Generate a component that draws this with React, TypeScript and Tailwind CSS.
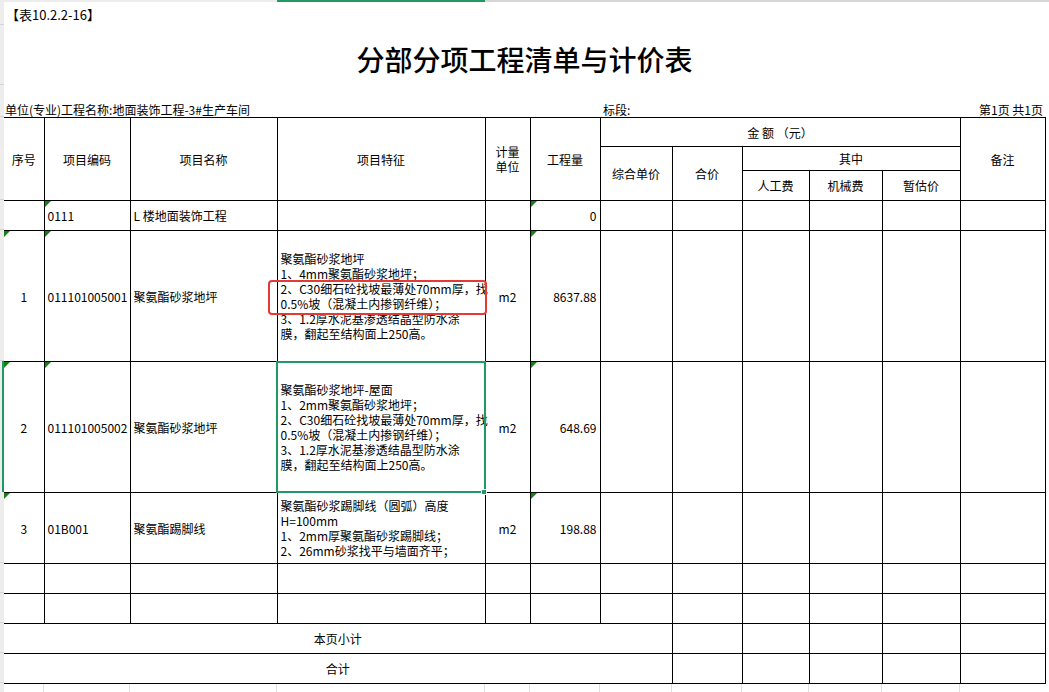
import React from "react";

// 分部分项工程清单与计价表 — spreadsheet print view
const td = "border border-black p-0 text-[12px] leading-[15px] align-middle";
const tdC = td + " text-center";
const tdL = td + " text-left pl-[3px]";
const tdR = td + " text-right pr-[3px] text-[11px]";

// the little green "number stored as text" corner
const Mark = () => (
  <span className="absolute left-0 top-0 h-0 w-0 border-t-[6px] border-r-[6px] border-t-[#128212] border-r-transparent" />
);

const Lines = ({ lines }: { lines: string[] }) => (
  <div className="whitespace-nowrap">
    {lines.map((l, i) => (
      <div key={i}>{l}</div>
    ))}
  </div>
);

const EmptyCells = ({ n }: { n: number }) => (
  <>
    {Array.from({ length: n }).map((_, i) => (
      <td key={i} className={td} />
    ))}
  </>
);

const feat1 = [
  "聚氨酯砂浆地坪",
  "1、4mm聚氨酯砂浆地坪；",
  "2、C30细石砼找坡最薄处70mm厚，找",
  "0.5%坡（混凝土内掺钢纤维）；",
  "3、1.2厚水泥基渗透结晶型防水涂",
  "膜，翻起至结构面上250高。",
];
const feat2 = [
  "聚氨酯砂浆地坪-屋面",
  "1、2mm聚氨酯砂浆地坪；",
  "2、C30细石砼找坡最薄处70mm厚，找",
  "0.5%坡（混凝土内掺钢纤维）；",
  "3、1.2厚水泥基渗透结晶型防水涂",
  "膜，翻起至结构面上250高。",
];
const feat3 = [
  "聚氨酯砂浆踢脚线（圆弧）高度",
  "H=100mm",
  "1、2mm厚聚氨酯砂浆踢脚线；",
  "2、26mm砂浆找平与墙面齐平；",
];

export default function App() {
  return (
    <div className="relative h-[692px] w-[1049px] overflow-hidden bg-white font-['Noto_Sans_CJK_SC',sans-serif] text-black">
      {/* column header edge */}
      <div className="flex h-[2px]">
        <div className="w-[277px] bg-[#ececec]" />
        <div className="w-[208px] bg-[#1f9a62]" />
        <div className="flex-1 bg-[#d6d6d6]" />
      </div>

      <div className="flex">
        {/* row header edge */}
        <div className="flex h-[690px] w-[4px] flex-col bg-[#ededed]">
          <div className="h-[23px] border-b border-[#d4d4d4]" />
          <div className="h-[60px] border-b border-[#d4d4d4]" />
          <div className="h-[32px] border-b border-[#d4d4d4]" />
          <div className="h-[83px] border-b border-[#d4d4d4]" />
          <div className="h-[30px] border-b border-[#d4d4d4]" />
          <div className="h-[131px] border-b border-[#d4d4d4]" />
          <div className="flex h-[131px] justify-end">
            <div className="w-[2px] bg-[#1f9a62]" />
          </div>
          <div className="h-[71px] border-b border-[#d4d4d4]" />
          <div className="h-[30px] border-b border-[#d4d4d4]" />
          <div className="h-[30px] border-b border-[#d4d4d4]" />
          <div className="h-[30px] border-b border-[#d4d4d4]" />
          <div className="h-[30px] border-b border-[#d4d4d4]" />
          <div className="flex-1" />
        </div>

        <div className="w-[1045px]">
          {/* sheet heading */}
          <div className="flex h-[115px] w-[1041px] flex-col">
            <div className="h-[26px] pl-[2px] pt-[4px] text-[13px] leading-[17px]">【表10.2.2-16】</div>
            <div className="flex h-[62px] items-center justify-center text-[28px] font-medium leading-[36px]">
              分部分项工程清单与计价表
            </div>
            <div className="flex h-[27px] items-end text-[12px] leading-[14px]">
              <div className="w-[599px] pl-[1px]">单位(专业)工程名称:地面装饰工程-3#生产车间</div>
              <div className="flex-1">标段:</div>
              <div className="pr-[2px]">第1页 共1页</div>
            </div>
          </div>

          <table className="w-[1041px] table-fixed border-collapse">
            <colgroup>
              <col className="w-[40px]" />
              <col className="w-[86px]" />
              <col className="w-[147px]" />
              <col className="w-[208px]" />
              <col className="w-[45px]" />
              <col className="w-[70px]" />
              <col className="w-[72px]" />
              <col className="w-[70px]" />
              <col className="w-[67px]" />
              <col className="w-[73px]" />
              <col className="w-[78px]" />
              <col className="w-[85px]" />
            </colgroup>
            <tbody>
              <tr className="h-[29px]">
                <td rowSpan={3} className={tdC + " border-l-0"}>序号</td>
                <td rowSpan={3} className={tdC}>项目编码</td>
                <td rowSpan={3} className={tdC}>项目名称</td>
                <td rowSpan={3} className={tdC}>项目特征</td>
                <td rowSpan={3} className={tdC}>
                  计量
                  <br />
                  单位
                </td>
                <td rowSpan={3} className={tdC}>工程量</td>
                <td colSpan={5} className={tdC}>金 额 （元）</td>
                <td rowSpan={3} className={tdC}>备注</td>
              </tr>
              <tr className="h-[24px]">
                <td rowSpan={2} className={tdC}>综合单价</td>
                <td rowSpan={2} className={tdC}>合价</td>
                <td colSpan={3} className={tdC}>其中</td>
              </tr>
              <tr className="h-[30px]">
                <td className={tdC}>人工费</td>
                <td className={tdC}>机械费</td>
                <td className={tdC}>暂估价</td>
              </tr>

              <tr className="h-[30px]">
                <td className={td + " border-l-0"} />
                <td className={tdL + " relative text-[11px]"}>
                  0111
                  <Mark />
                </td>
                <td className={tdL}>L 楼地面装饰工程</td>
                <td className={td} />
                <td className={td} />
                <td className={tdR + " relative"}>
                  0
                  <Mark />
                </td>
                <EmptyCells n={6} />
              </tr>

              <tr className="h-[131px]">
                <td className={tdC + " relative border-l-0 text-[11px]"}>
                  1
                  <Mark />
                </td>
                <td className={tdL + " relative text-[11px]"}>
                  011101005001
                  <Mark />
                </td>
                <td className={tdL}>聚氨酯砂浆地坪</td>
                <td className={tdL}>
                  <Lines lines={feat1} />
                </td>
                <td className={tdC + " text-[11px]"}>m2</td>
                <td className={tdR + " relative"}>
                  8637.88
                  <Mark />
                </td>
                <EmptyCells n={6} />
              </tr>

              <tr className="h-[131px]">
                <td className={tdC + " relative border-l-0 text-[11px]"}>
                  2
                  <Mark />
                </td>
                <td className={tdL + " relative text-[11px]"}>
                  011101005002
                  <Mark />
                </td>
                <td className={tdL}>聚氨酯砂浆地坪</td>
                <td className={tdL}>
                  <Lines lines={feat2} />
                </td>
                <td className={tdC + " text-[11px]"}>m2</td>
                <td className={tdR + " relative"}>
                  648.69
                  <Mark />
                </td>
                <EmptyCells n={6} />
              </tr>

              <tr className="h-[71px]">
                <td className={tdC + " relative border-l-0 text-[11px]"}>
                  3
                  <Mark />
                </td>
                <td className={tdL + " text-[11px]"}>01B001</td>
                <td className={tdL}>聚氨酯踢脚线</td>
                <td className={tdL}>
                  <Lines lines={feat3} />
                </td>
                <td className={tdC + " text-[11px]"}>m2</td>
                <td className={tdR + " relative"}>
                  198.88
                  <Mark />
                </td>
                <EmptyCells n={6} />
              </tr>

              <tr className="h-[30px]">
                <td className={td + " border-l-0"} />
                <EmptyCells n={11} />
              </tr>
              <tr className="h-[30px]">
                <td className={td + " border-l-0"} />
                <EmptyCells n={11} />
              </tr>

              <tr className="h-[30px]">
                <td colSpan={7} className={tdC + " border-l-0"}>本页小计</td>
                <EmptyCells n={5} />
              </tr>
              <tr className="h-[30px]">
                <td colSpan={7} className={tdC + " border-l-0"}>合计</td>
                <EmptyCells n={5} />
              </tr>
            </tbody>
          </table>

          {/* sheet gridlines below the print area */}
          <div className="flex h-[12px]">
            <div className="w-[40px] border-r border-[#e0e0e0]" />
            <div className="w-[86px] border-r border-[#e0e0e0]" />
            <div className="w-[147px] border-r border-[#e0e0e0]" />
            <div className="w-[208px] border-r border-[#e0e0e0]" />
            <div className="w-[45px] border-r border-[#e0e0e0]" />
            <div className="w-[70px] border-r border-[#e0e0e0]" />
            <div className="w-[72px] border-r border-[#e0e0e0]" />
            <div className="w-[70px] border-r border-[#e0e0e0]" />
            <div className="w-[67px] border-r border-[#e0e0e0]" />
            <div className="w-[73px] border-r border-[#e0e0e0]" />
            <div className="w-[78px] border-r border-[#e0e0e0]" />
            <div className="w-[85px]" />
          </div>
        </div>
      </div>

      {/* red highlight over feature line 2 of row 1 */}
      <div className="absolute left-[268px] top-[280px] h-[35px] w-[219px] rounded-[4px] border-2 border-[#e53935]" />

      {/* active cell selection */}
      <div className="absolute left-[276px] top-[361px] h-[132px] w-[210px] border-2 border-[#1f9a62]" />
      <div className="absolute left-[481px] top-[489px] h-[6px] w-[6px] border border-white bg-[#1f9a62]" />
    </div>
  );
}
